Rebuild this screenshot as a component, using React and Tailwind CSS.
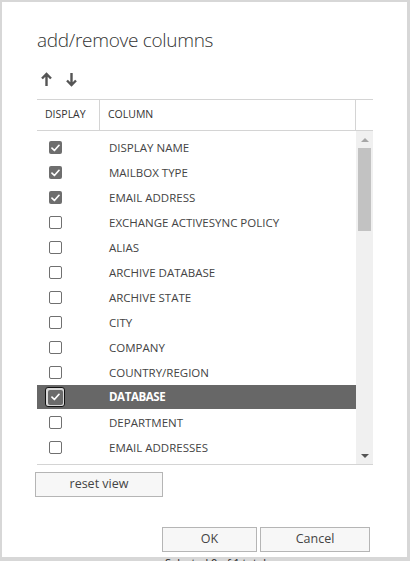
import React from 'react';

const rows = [
  { name: 'DISPLAY NAME', checked: true },
  { name: 'MAILBOX TYPE', checked: true },
  { name: 'EMAIL ADDRESS', checked: true },
  { name: 'EXCHANGE ACTIVESYNC POLICY', checked: false },
  { name: 'ALIAS', checked: false },
  { name: 'ARCHIVE DATABASE', checked: false },
  { name: 'ARCHIVE STATE', checked: false },
  { name: 'CITY', checked: false },
  { name: 'COMPANY', checked: false },
  { name: 'COUNTRY/REGION', checked: false },
  { name: 'DATABASE', checked: true, selected: true },
  { name: 'DEPARTMENT', checked: false },
  { name: 'EMAIL ADDRESSES', checked: false },
  { name: 'FIRST NAME', checked: false },
];

function Check() {
  return (
    <svg width="9" height="8" viewBox="0 0 9 8" fill="none">
      <path d="M1 4.2 L3.4 6.5 L8 1.3" stroke="white" strokeWidth="1.7" strokeLinecap="round" strokeLinejoin="round" />
    </svg>
  );
}

function Box({ checked, selected }) {
  if (selected) {
    return (
      <div className="flex h-[20px] w-[20px] items-center justify-center rounded-[3px] border-[1.5px] border-[#111] bg-[#d8d8d8]">
        <div className="flex h-[15px] w-[15px] items-center justify-center rounded-[2px] bg-[#6b6b6b]">
          <Check />
        </div>
      </div>
    );
  }
  if (checked) {
    return (
      <div className="flex h-[13px] w-[13px] items-center justify-center rounded-[2px] bg-[#6e6e6e]">
        <Check />
      </div>
    );
  }
  return <div className="h-[13px] w-[13px] rounded-[2px] border border-[#707070] bg-white" />;
}

export default function App() {
  return (
    <div className="h-[561px] w-[410px] overflow-hidden bg-[#d7d7d7]" style={{ fontFamily: '"Open Sans", "Noto Sans", sans-serif' }}>
      <div className="ml-[2px] mt-[2px] flex h-[555px] w-[405px] flex-col bg-white pl-[35px]">
        <h1 className="mt-[26px] h-[24px] text-[19px] font-light leading-[24px] tracking-[-0.3px] text-[#333]">add/remove columns</h1>

        <div className="ml-[4px] mt-[18px] flex h-[18px] items-center gap-[14px]">
          <svg width="11" height="15" viewBox="0 0 11 15" fill="none">
            <path d="M5.5 14 V2 M1 6.5 L5.5 2 L10 6.5" stroke="#555" strokeWidth="2.4" />
          </svg>
          <svg width="11" height="15" viewBox="0 0 11 15" fill="none">
            <path d="M5.5 1 V13 M1 8.5 L5.5 13 L10 8.5" stroke="#555" strokeWidth="2.4" />
          </svg>
        </div>

        <div className="mt-[11px] w-[336px] border-t border-[#d4d4d4]">
          <div className="flex h-[31px] items-center border-b border-[#d4d4d4] text-[10.5px] text-[#333]">
            <div className="flex h-full w-[63px] items-center border-r border-[#d4d4d4] pl-[8px]">DISPLAY</div>
            <div className="flex h-full w-[256px] items-center border-r border-[#d4d4d4] pl-[8px]">COLUMN</div>
          </div>

          <div className="flex h-[334px] border-b border-[#d4d4d4]">
            <div className="h-full w-[319px] overflow-hidden pt-[4px]">
              {rows.map((r) => (
                <div
                  key={r.name}
                  className={
                    r.selected
                      ? 'mb-[1px] flex h-[24px] items-center bg-[#676767] text-white'
                      : 'flex h-[25px] items-center text-[#444]'
                  }
                >
                  <div className="flex w-[72px] items-center pl-[12px]">
                    {r.selected ? <div className="-ml-[4px]"><Box checked selected /></div> : <Box checked={r.checked} />}
                  </div>
                  <span className={r.selected ? 'text-[11.5px] font-bold tracking-[-0.4px]' : 'text-[11.5px]'}>{r.name}</span>
                </div>
              ))}
            </div>
            <div className="flex h-full w-[17px] flex-col items-center bg-[#f0f0f0]">
              <div className="mt-[7px] h-0 w-0 border-x-[4px] border-b-[4px] border-x-transparent border-b-[#a6a6a6]" />
              <div className="mt-[6px] h-[83px] w-[13px] bg-[#c2c2c2]" />
              <div className="flex-1" />
              <div className="mb-[6px] h-0 w-0 border-x-[4px] border-t-[4px] border-x-transparent border-t-[#555]" />
            </div>
          </div>
        </div>

        <button className="-ml-[2px] mt-[7px] flex h-[25px] w-[128px] items-center justify-center border border-[#b5b5b5] bg-[#f7f7f7] text-[12.5px] text-[#444]">
          reset view
        </button>

        <div className="ml-[125px] mt-[30px] flex gap-[3px]">
          <button className="flex h-[25px] w-[95px] items-center justify-center border border-[#b5b5b5] bg-[#f7f7f7] text-[12.5px] text-[#444]">OK</button>
          <button className="flex h-[25px] w-[110px] items-center justify-center border border-[#b5b5b5] bg-[#f7f7f7] text-[12.5px] text-[#444]">Cancel</button>
        </div>
      </div>
      <div className="pl-[165px] text-[11px] leading-[11px] text-[#222]">Selected 0 of 1 total</div>
    </div>
  );
}
